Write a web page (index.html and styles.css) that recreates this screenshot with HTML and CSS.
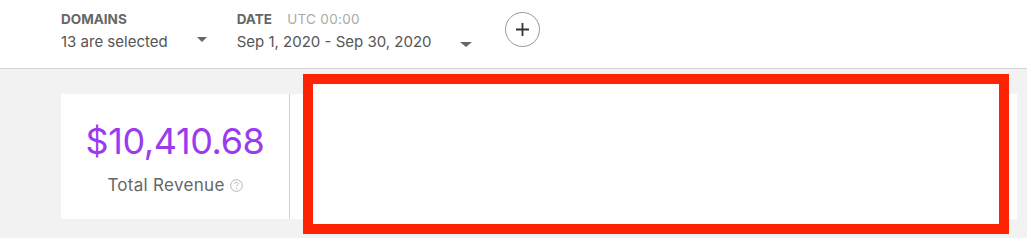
FILE: index.html
```html
<!DOCTYPE html>
<html>
<head>
<meta charset="utf-8">
<link rel="stylesheet" href="styles.css">
</head>
<body>
<header class="toolbar">
  <div class="filter filter-domains">
    <div class="filter-label">DOMAINS</div>
    <div class="filter-value">
      <span>13 are selected</span>
      <span class="caret caret-domains"></span>
    </div>
  </div>
  <div class="filter filter-date">
    <div class="filter-label">DATE <span class="filter-sub">UTC 00:00</span></div>
    <div class="filter-value">
      <span>Sep 1, 2020 - Sep 30, 2020</span>
      <span class="caret caret-date"></span>
    </div>
  </div>
  <button class="add-btn" aria-label="Add filter">
    <svg width="15" height="15" viewBox="0 0 15 15"><path d="M7.5 1 V14 M1 7.5 H14" stroke="#333" stroke-width="1.8" fill="none"/></svg>
  </button>
</header>
<main class="content">
  <section class="card">
    <div class="metric">
      <div class="metric-value">$10,410.68</div>
      <div class="metric-label">Total Revenue
        <svg class="help" width="13" height="13" viewBox="0 0 12 12"><circle cx="6" cy="6" r="5.4" stroke="#aaa" stroke-width="0.8" fill="none"/><path d="M4.3 4.6 C4.3 3.6 5 3 6 3 C7 3 7.7 3.6 7.7 4.4 C7.7 5.4 6 5.5 6 6.8" stroke="#aaa" stroke-width="0.8" fill="none"/><circle cx="6" cy="8.7" r="0.55" fill="#aaa"/></svg>
      </div>
    </div>
    <div class="chart"></div>
  </section>
</main>
<div class="highlight"></div>
</body>
</html>
```

FILE: styles.css
```css
html, body {
  margin: 0;
  padding: 0;
}
body {
  background: #f2f2f2;
  font-family: Inter, "Open Sans", "Liberation Sans", sans-serif;
  color: #666;
  width: 1027px;
  height: 238px;
  overflow: hidden;
  position: relative;
}
.toolbar {
  background: #fff;
  height: 69px;
  box-sizing: border-box;
  border-bottom: 1px solid #d4d4d4;
  display: flex;
  align-items: flex-start;
  padding: 11px 0 0 61px;
}
.filter-label {
  font-size: 13.5px;
  font-weight: 700;
  line-height: 17px;
  color: #666;
}
.filter-sub {
  font-weight: 400;
  color: #aaa;
  margin-left: 12px;
  letter-spacing: 0.3px;
}
.filter-value {
  display: flex;
  align-items: flex-start;
  margin-top: 4px;
  font-size: 15px;
  line-height: 20px;
  color: #555;
}
.caret {
  width: 0;
  height: 0;
  border-left: 5px solid transparent;
  border-right: 5px solid transparent;
  border-top: 5px solid #666;
}
.caret-domains {
  margin: 5px 0 0 29px;
}
.caret-date {
  margin: 10px 0 0 28px;
  border-left-width: 6px;
  border-right-width: 6px;
}
.filter-date {
  margin-left: 30px;
}
.add-btn {
  margin: 1px 0 0 33px;
  width: 35px;
  height: 35px;
  border-radius: 50%;
  border: 1px solid #999;
  background: #fff;
  padding: 0;
  display: flex;
  align-items: center;
  justify-content: center;
}
.content {
  padding: 25px 10px 0 61px;
}
.card {
  background: #fff;
  height: 125px;
  display: flex;
}
.metric {
  width: 229px;
  border-right: 1px solid #d0d0d0;
  display: flex;
  flex-direction: column;
  align-items: center;
  padding-top: 25px;
  box-sizing: border-box;
}
.metric-value {
  font-size: 36px;
  line-height: 44px;
  color: #9a3bef;
  letter-spacing: -0.4px;
}
.metric-label {
  margin-top: 11px;
  font-size: 17px;
  line-height: 22px;
  color: #666;
  display: flex;
  align-items: center;
  gap: 5px;
  letter-spacing: 0.3px;
}
.help {
  margin-top: 1px;
}
.chart {
  flex: 1;
}
.highlight {
  position: absolute;
  left: 303px;
  top: 74px;
  width: 706px;
  height: 160px;
  box-sizing: border-box;
  border: 10px solid #ff2305;
  background: #fefefe;
}
```
